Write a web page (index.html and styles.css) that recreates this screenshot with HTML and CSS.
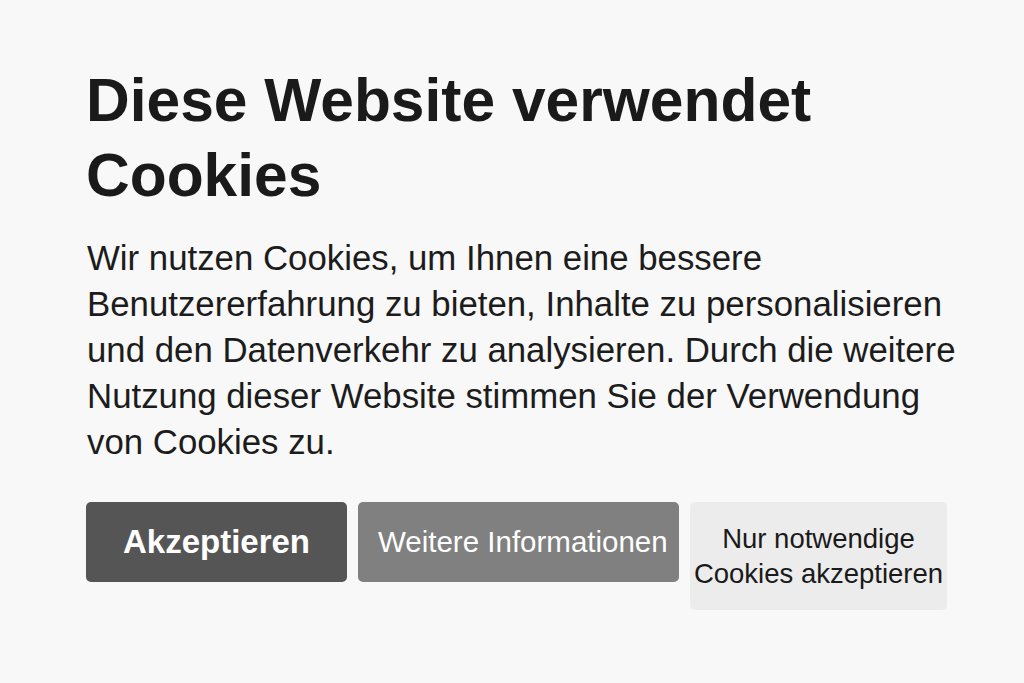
FILE: index.html
```html
<html>
	<head>
		<link rel="stylesheet" href="styles.css">
	</head>
<body>
<div class="banner">
	<h1 class="title">Diese Website verwendet Cookies</h1>
	<p class="text">Wir nutzen Cookies, um Ihnen eine bessere Benutzererfahrung zu bieten, Inhalte zu personalisieren und den Datenverkehr zu analysieren. Durch die weitere Nutzung dieser Website stimmen Sie der Verwendung von Cookies zu.</p>
	<div class="actions">
		<button class="btn accept">Akzeptieren</button>
		<button class="btn info">Weitere Informationen</button>
		<button class="btn needed">Nur notwendige<br>Cookies akzeptieren</button>
	</div>
</div>
</body>
</html>
```

FILE: styles.css
```css
body{
	margin: 0px;
	padding: 0px;
	background: #f8f8f8;
	font-family: "Liberation Sans", Arial, sans-serif;
	overflow: hidden;
}

.banner{
	padding: 63px 0 0 86px;
	width: 885px;
}

.title{
	margin: 0;
	font-size: 60.5px;
	line-height: 75px;
	font-weight: bold;
	color: #1a1a1a;
}

.text{
	margin: 22px 0 0 1px;
	font-size: 34.8px;
	line-height: 46px;
	color: #1c1c1c;
}

.actions{
	display: flex;
	align-items: flex-start;
	gap: 11px;
	margin-top: 37px;
}

.btn{
	border: none;
	border-radius: 5px;
	font-family: "Liberation Sans", Arial, sans-serif;
	display: flex;
	align-items: center;
	justify-content: center;
	padding: 0;
}

.accept{
	width: 261px;
	height: 80px;
	background: #555555;
	color: #fff;
	font-size: 33px;
	font-weight: bold;
}

.info{
	width: 321px;
	height: 80px;
	background: #808080;
	color: #fff;
	font-size: 29.5px;
	justify-content: flex-start;
	padding-left: 20px;
	white-space: nowrap;
}

.needed{
	width: 257px;
	height: 108px;
	background: #ececec;
	color: #1a1a1a;
	font-size: 27.5px;
	line-height: 35px;
	text-align: center;
	white-space: nowrap;
}
```
